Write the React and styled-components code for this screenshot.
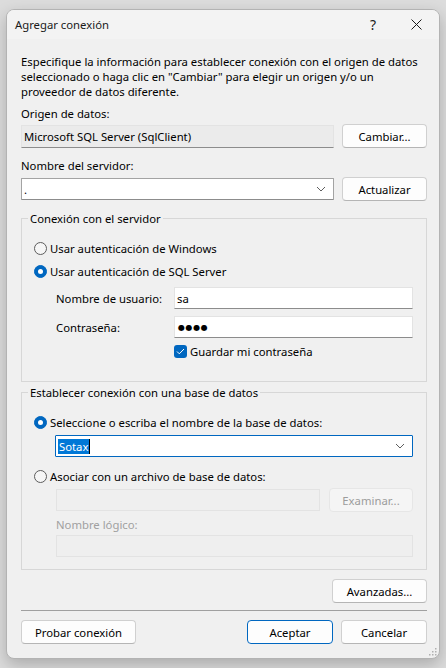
import React from 'react'
import styled, { createGlobalStyle } from 'styled-components'

// Global page rules
const GlobalStyle = createGlobalStyle`
    html, body {
        margin: 0;
        padding: 0;
        background: #dcdcdc;
    }
    body {
        font-family: "Noto Sans", "Segoe UI", sans-serif;
        font-size: 11.3px;
        color: #000;
    }
`

const Screen = styled.div`
    width: 446px;
    height: 668px;
    box-sizing: border-box;
    padding: 9px 6px 0 6px;
    overflow: hidden;
`

const Dialog = styled.div`
    position: relative;
    width: 434px;
    box-sizing: border-box;
    border: 1px solid #b3b3b3;
    border-radius: 8px;
    background: #f0f0f0;
    box-shadow: 0 6px 16px rgba(0, 0, 0, 0.22);
    overflow: hidden;
`

const TitleBar = styled.div`
    display: flex;
    align-items: center;
    height: 29px;
    padding-left: 8px;
    background: #f3f3f3;
`

const Title = styled.span`
    flex: 1;
    color: #1a1a1a;
    line-height: 15px;
`

const TitleButton = styled.div`
    display: flex;
    align-items: center;
    justify-content: center;
    width: ${p => p.$w}px;
    height: 29px;
    font-size: 14px;
    color: #1a1a1a;
`

const Body = styled.div`
    padding: 15px 12px 14px 14px;
`

const Description = styled.p`
    margin: 0;
    line-height: 15px;
    white-space: nowrap;
`

const Label = styled.div`
    margin-top: ${p => p.$mt || 0}px;
    margin-left: ${p => p.$ml || 0}px;
    line-height: 15px;
    color: ${p => (p.$disabled ? '#a0a0a0' : '#000')};
`

const Row = styled.div`
    display: flex;
    align-items: center;
    gap: ${p => p.$gap || 8}px;
    margin-top: ${p => p.$mt || 0}px;
    margin-left: ${p => p.$ml || 0}px;
`

const Field = styled.div`
    flex: 1;
    display: flex;
    align-items: center;
    height: ${p => p.$h || 22}px;
    box-sizing: border-box;
    padding: 0 2px;
    background: ${p => (p.$readonly ? '#ebebeb' : p.$disabled ? '#efefef' : '#fff')};
    border: 1px solid ${p => (p.$focus ? '#0067c0' : p.$combo ? '#a3a3a3' : '#e3e3e3')};
    border-bottom-color: ${p => (p.$focus ? '#0067c0' : p.$disabled ? '#e3e3e3' : '#8c8c8c')};
    border-radius: ${p => (p.$combo ? 1 : 0)}px;
    white-space: nowrap;
`

const FieldText = styled.span`
    flex: 1;
    line-height: 15px;
`

const Selected = styled.span`
    background: #0078d7;
    color: #fff;
    padding: 0 1px;
    border-right: 1px solid #000;
`

const Dots = styled.span`
    font-family: "DejaVu Sans", sans-serif;
    font-size: 8px;
    letter-spacing: 0.6px;
    padding-left: 1px;
`

const Button = styled.div`
    display: flex;
    align-items: center;
    justify-content: center;
    flex-shrink: 0;
    width: ${p => p.$w}px;
    height: 24px;
    box-sizing: border-box;
    border: 1px solid ${p => (p.$primary ? '#0067c0' : p.$disabled ? '#e6e6e6' : '#d0d0d0')};
    border-bottom-color: ${p => (p.$primary ? '#0067c0' : p.$disabled ? '#e6e6e6' : '#b5b5b5')};
    border-radius: 4px;
    background: ${p => (p.$disabled ? '#f5f5f5' : '#fdfdfd')};
    color: ${p => (p.$disabled ? '#9c9c9c' : '#000')};
    line-height: 15px;
`

const Group = styled.fieldset`
    margin: ${p => p.$mt}px 0 0 0;
    padding: 0 13px ${p => p.$pb}px 12px;
    border: 1px solid #d7d7d7;
    min-width: 0;
`

const Legend = styled.legend`
    margin-left: -6px;
    padding: 0 2px;
    line-height: 15px;
`

const Choice = styled.div`
    display: flex;
    align-items: center;
    gap: 3px;
    height: 15px;
    margin-top: ${p => p.$mt || 0}px;
`

const Radio = styled.span`
    width: 13px;
    height: 13px;
    box-sizing: border-box;
    border-radius: 50%;
    flex-shrink: 0;
    display: flex;
    align-items: center;
    justify-content: center;
    background: ${p => (p.$on ? '#0067c0' : '#f6f6f6')};
    border: 1px solid ${p => (p.$on ? '#0067c0' : '#5c5c5c')};
    &::after {
        content: '';
        display: ${p => (p.$on ? 'block' : 'none')};
        width: 5px;
        height: 5px;
        border-radius: 50%;
        background: #fff;
    }
`

const CheckBox = styled.span`
    width: 13px;
    height: 13px;
    border-radius: 3px;
    background: #0067c0;
    display: flex;
    align-items: center;
    justify-content: center;
`

const FormGrid = styled.div`
    display: grid;
    grid-template-columns: 118px 1fr;
    align-items: center;
    row-gap: 7px;
    margin: 8px 0 0 22px;
`

const CheckRow = styled.div`
    display: flex;
    align-items: center;
    gap: 3px;
    height: 15px;
    margin: 6px 0 0 140px;
`

const RightRow = styled.div`
    display: flex;
    justify-content: flex-end;
    margin-top: ${p => p.$mt}px;
`

const Separator = styled.div`
    height: 1px;
    background: #a0a0a0;
    margin-top: 7px;
`

const Footer = styled.div`
    display: flex;
    gap: 8px;
    margin-top: 9px;
`

const Spacer = styled.div`
    flex: 1;
`

const Grip = styled.svg`
    position: absolute;
    right: 2px;
    bottom: 2px;
`

function Chevron() {
    return (
        <svg width="10" height="6" viewBox="0 0 10 6" style={{ marginRight: 5 }}>
            <path d="M1 1 L5 5 L9 1" fill="none" stroke="#5f5f5f" strokeWidth="1" />
        </svg>
    )
}

/**
 * Agregar conexión dialog
 */
function App() {
    return (
        <>
            <GlobalStyle />
            <Screen>
                <Dialog>
                    <TitleBar>
                        <Title>Agregar conexión</Title>
                        <TitleButton $w={40}>?</TitleButton>
                        <TitleButton $w={46}>
                            <svg width="11" height="11" viewBox="0 0 11 11">
                                <path d="M0.5 0.5 L10.5 10.5 M10.5 0.5 L0.5 10.5" stroke="#1a1a1a" strokeWidth="1" />
                            </svg>
                        </TitleButton>
                    </TitleBar>
                    <Body>
                        <Description>
                            Especifique la información para establecer conexión con el origen de datos<br />
                            seleccionado o haga clic en "Cambiar" para elegir un origen y/o un<br />
                            proveedor de datos diferente.
                        </Description>

                        <Label $mt={7}>Origen de datos:</Label>
                        <Row $mt={3}>
                            <Field $readonly $h={23}>
                                <FieldText>Microsoft SQL Server (SqlClient)</FieldText>
                            </Field>
                            <Button $w={85}>Cambiar...</Button>
                        </Row>

                        <Label $mt={10}>Nombre del servidor:</Label>
                        <Row $mt={4}>
                            <Field $combo>
                                <FieldText>.</FieldText>
                                <Chevron />
                            </Field>
                            <Button $w={85}>Actualizar</Button>
                        </Row>

                        <Group $mt={10} $pb={22}>
                            <Legend>Conexión con el servidor</Legend>
                            <Choice $mt={15}>
                                <Radio />
                                Usar autenticación de Windows
                            </Choice>
                            <Choice $mt={8}>
                                <Radio $on />
                                Usar autenticación de SQL Server
                            </Choice>
                            <FormGrid>
                                <span>Nombre de usuario:</span>
                                <Field>
                                    <FieldText>sa</FieldText>
                                </Field>
                                <span>Contraseña:</span>
                                <Field>
                                    <Dots>●●●●</Dots>
                                </Field>
                            </FormGrid>
                            <CheckRow>
                                <CheckBox>
                                    <svg width="9" height="7" viewBox="0 0 9 7">
                                        <path d="M1 3.5 L3.3 5.8 L8 1" fill="none" stroke="#fff" strokeWidth="1" />
                                    </svg>
                                </CheckBox>
                                Guardar mi contraseña
                            </CheckRow>
                        </Group>

                        <Group $mt={3} $pb={12}>
                            <Legend>Establecer conexión con una base de datos</Legend>
                            <Choice $mt={15}>
                                <Radio $on />
                                Seleccione o escriba el nombre de la base de datos:
                            </Choice>
                            <Row $mt={5} $ml={21}>
                                <Field $combo $focus>
                                    <FieldText>
                                        <Selected>Sotax</Selected>
                                    </FieldText>
                                    <Chevron />
                                </Field>
                            </Row>
                            <Choice $mt={12}>
                                <Radio />
                                Asociar con un archivo de base de datos:
                            </Choice>
                            <Row $mt={4} $ml={22} $gap={9}>
                                <Field $disabled />
                                <Button $w={84} $disabled>Examinar...</Button>
                            </Row>
                            <Label $mt={5} $ml={22} $disabled>Nombre lógico:</Label>
                            <Row $mt={3} $ml={22}>
                                <Field $disabled />
                            </Row>
                        </Group>

                        <RightRow $mt={9}>
                            <Button $w={95}>Avanzadas...</Button>
                        </RightRow>
                        <Separator />
                        <Footer>
                            <Button $w={115}>Probar conexión</Button>
                            <Spacer />
                            <Button $w={86} $primary>Aceptar</Button>
                            <Button $w={86}>Cancelar</Button>
                        </Footer>
                    </Body>
                    <Grip width="9" height="9" viewBox="0 0 9 9">
                        {[[7, 1], [4, 4], [7, 4], [1, 7], [4, 7], [7, 7]].map(([x, y]) => (
                            <rect key={`${x}-${y}`} x={x} y={y} width="1.5" height="1.5" fill="#b0b0b0" />
                        ))}
                    </Grip>
                </Dialog>
            </Screen>
        </>
    )
}

export default App
